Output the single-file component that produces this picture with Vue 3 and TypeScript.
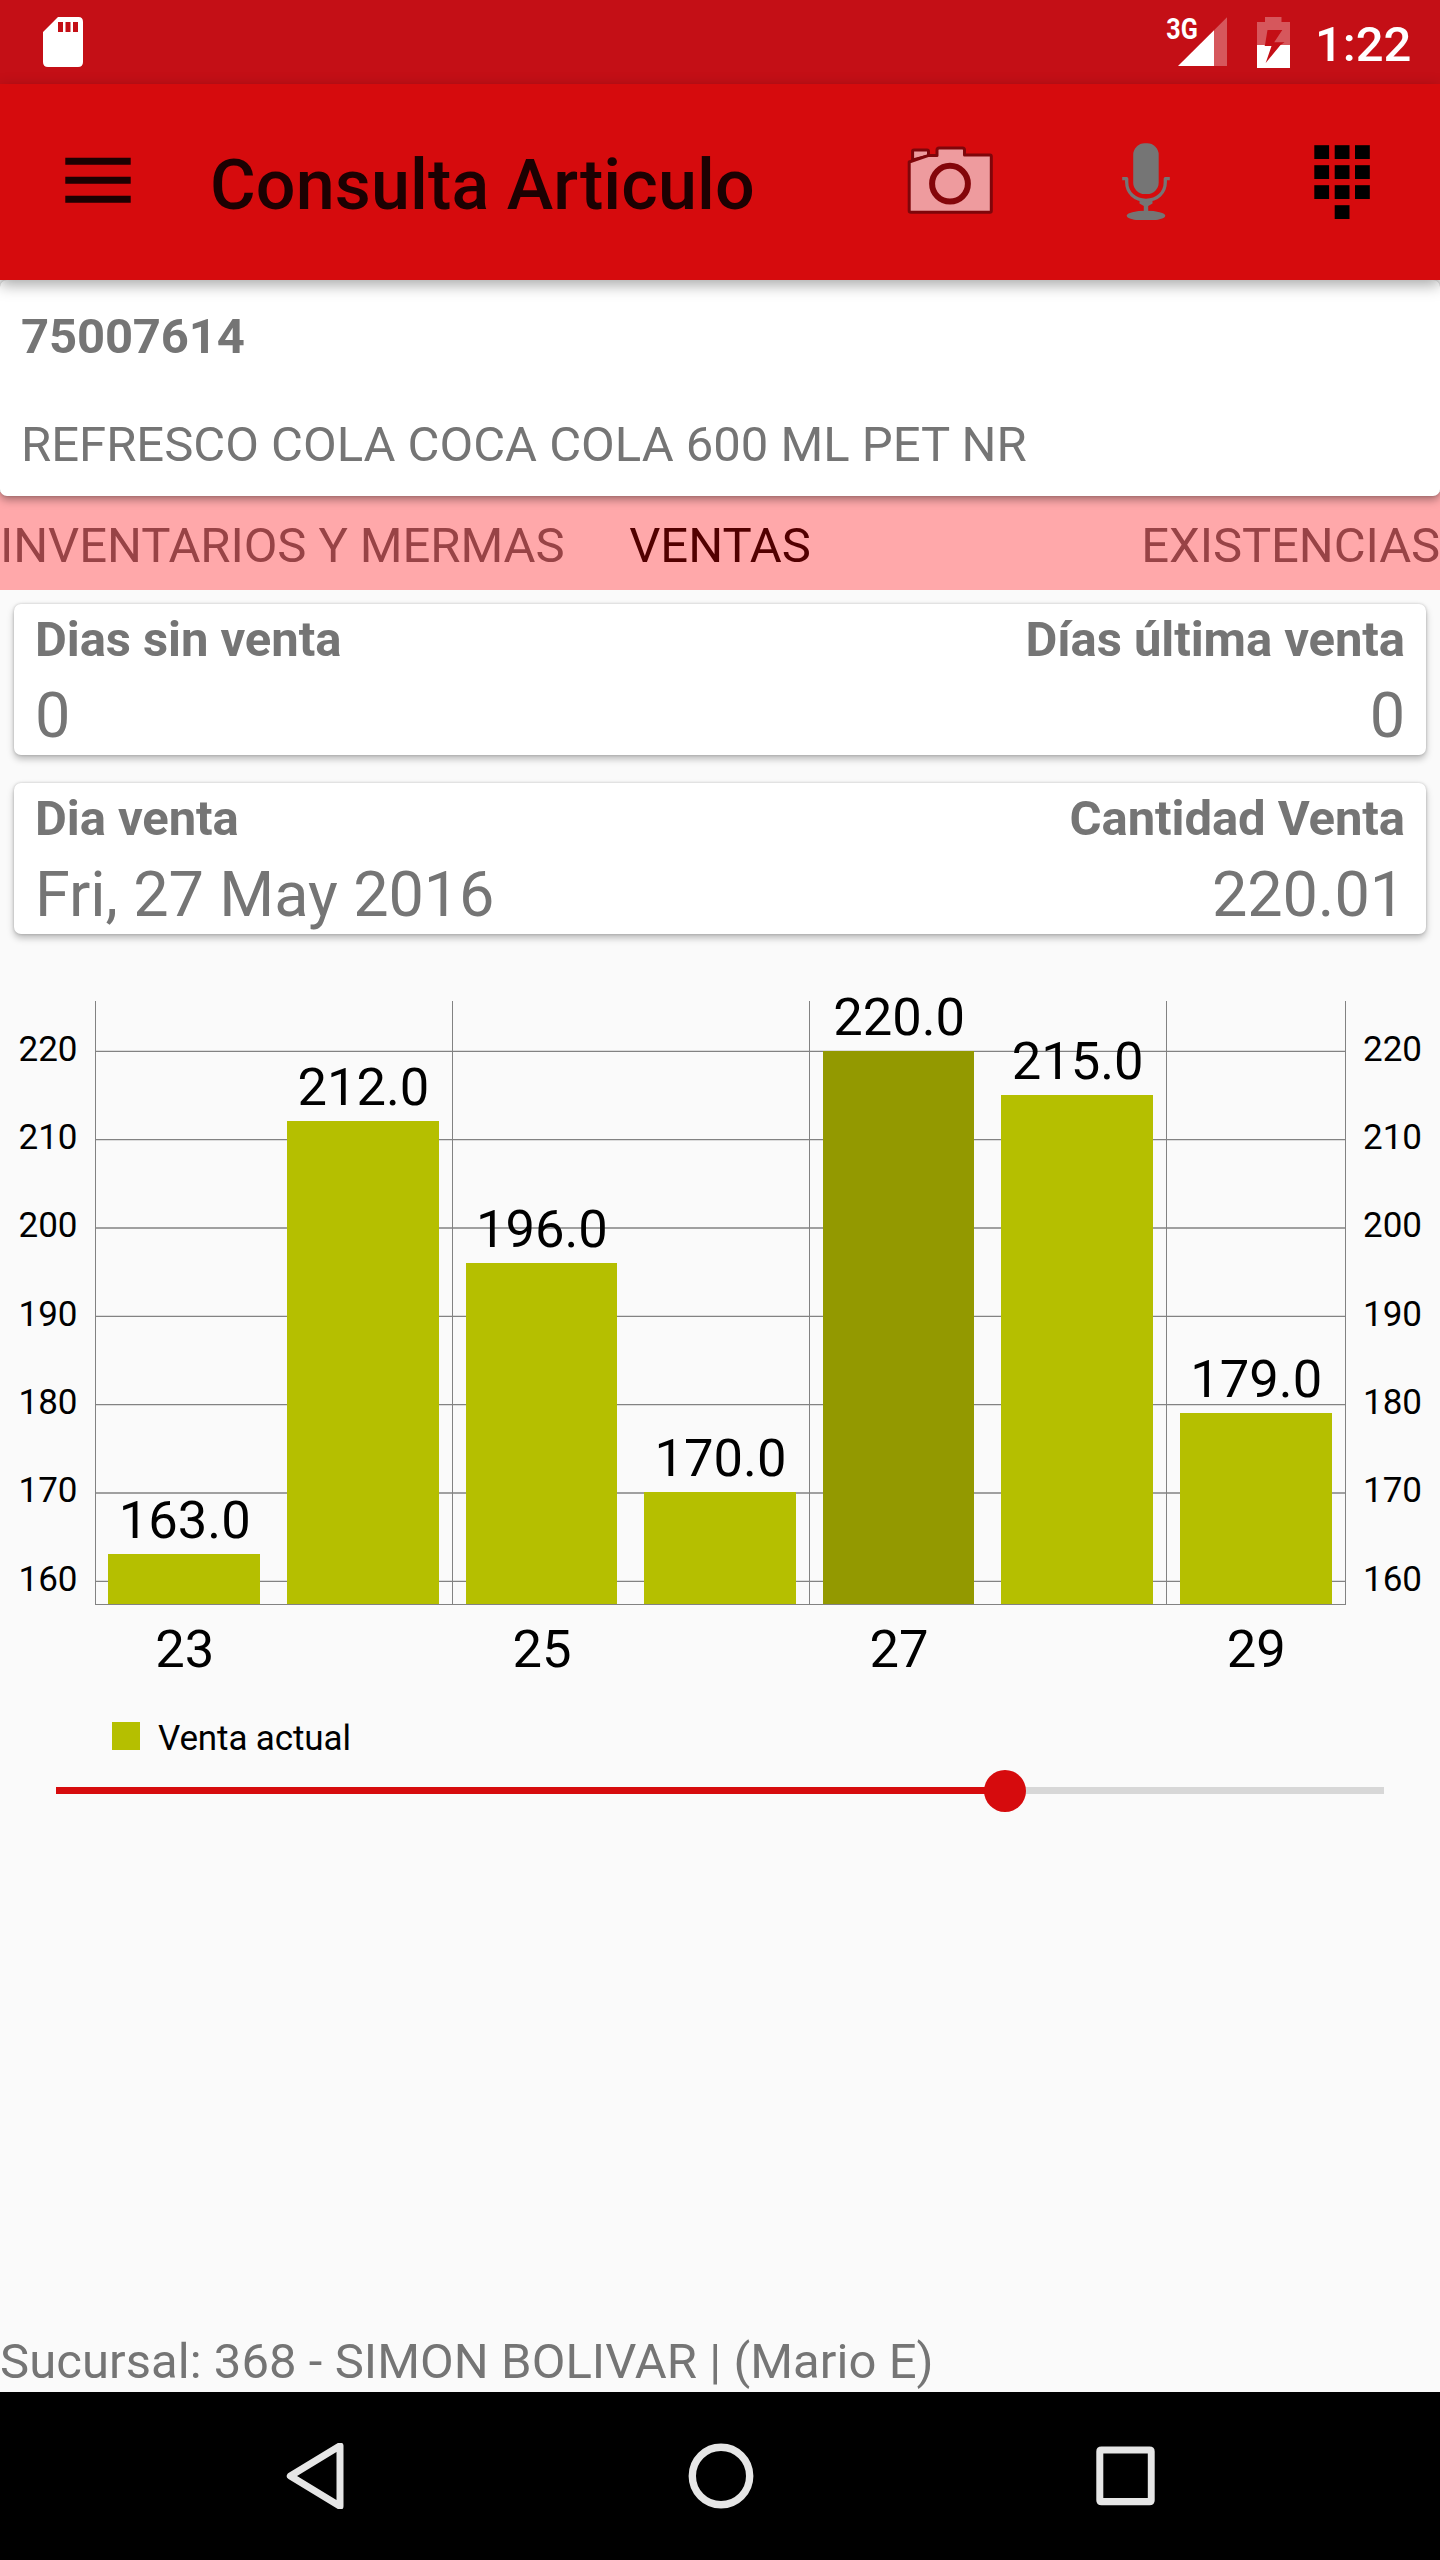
<script setup lang="ts">
interface Sale {
  day: number
  value: number
}

interface Stat {
  label: string
  value: string
}

const sales: Sale[] = [
  { day: 23, value: 163 },
  { day: 24, value: 212 },
  { day: 25, value: 196 },
  { day: 26, value: 170 },
  { day: 27, value: 220 },
  { day: 28, value: 215 },
  { day: 29, value: 179 },
]
const selectedDay = 27

const cards: Stat[][] = [
  [
    { label: 'Dias sin venta', value: '0' },
    { label: 'Días última venta', value: '0' },
  ],
  [
    { label: 'Dia venta', value: 'Fri, 27 May 2016' },
    { label: 'Cantidad Venta', value: '220.01' },
  ],
]

// Chart geometry, in the pixels of the chart's own box
const left = 95
const right = 1345
const top = 51
const bottom = 654
const slot = (right - left) / sales.length
const barWidth = slot * 0.85
const ticks = [220, 210, 200, 190, 180, 170, 160]

const yOf = (v: number) => 101.33 + (220 - v) * 8.833
const barTop = (v: number) => Math.floor(yOf(v))
const barX = (i: number) => Math.round(left + slot * i + (slot - barWidth) / 2)
const barEnd = (i: number) => Math.round(left + slot * i + (slot + barWidth) / 2)
const centre = (i: number) => left + slot * (i + 0.5)

const bars = sales.map((s, i) => ({
  ...s,
  x: barX(i),
  y: barTop(s.value),
  w: barEnd(i) - barX(i),
  h: bottom - barTop(s.value),
  cx: centre(i) + 0.5,
  active: s.day === selectedDay,
}))
const gridX = [0, 2, 4, 6, 7].map((i) => Math.floor(left + slot * i))
const dayLabels = bars.filter((_, i) => i % 2 === 0)

const padColumns = [0, 20.4, 40.7]
const padRows = [0, 20, 40]
const progress = (948.7 / 1328) * 100
</script>

<template>
  <div class="screen">
    <header class="status">
      <svg class="sd" width="40" height="50" viewBox="0 0 40 50">
        <path fill="#fff" fill-rule="evenodd" d="M15 0H35.500Q40 0 40 5V45Q40 50 35 50H5Q0 50 0 45V15ZM15 5V15H20V5ZM22.500 5V15H27.500V5ZM30 5V15H35V5Z" />
      </svg>
      <svg class="signal" width="76" height="60" viewBox="-12 -4 76 60">
        <path fill="#fff" fill-opacity=".3" d="M50 14.300 63 1.300V50H50Z" />
        <path fill="#fff" d="M14 50 50 14.300V50Z" />
        <text class="net" x="2.300" y="22.700" textLength="31.500" lengthAdjust="spacingAndGlyphs">3G</text>
      </svg>
      <svg class="battery" width="33" height="51" viewBox="0 0 33 51">
        <path fill="#fff" fill-opacity=".3" fill-rule="evenodd" d="M8 0H24.500V5H33V28H23.500L27.500 25.300H17.200L25.300 13H10.500L8 28H0V5H8Z" />
        <path fill="#fff" d="M0 28H8L7.500 29H14.500L8.700 46 23.500 28H33V51H0Z" />
      </svg>
      <span class="clock">1:22</span>
    </header>

    <nav class="appbar">
      <svg class="menu" width="66" height="46" viewBox="0 0 66 46">
        <path fill="#1c0102" d="M.3.800H65.700V7.800H.3ZM.3 19.800H65.700V26.800H.3ZM.3 38.800H65.700V45.800H.3Z" />
      </svg>
      <h1 class="title">Consulta Articulo</h1>
      <svg class="camera" width="100" height="80" viewBox="0 0 100 80">
        <g fill="#ee9b9e" stroke="#7e060a" stroke-width="3" stroke-linejoin="round">
          <path d="M12.600 20V11.200Q12.600 10 14 10H27Q28.500 10 28.500 11.500V16Z" />
          <path d="M9.200 22 28 15.600H37V10Q37 8 39 8H62.500Q64.500 8 64.500 10V15H90Q91.300 15 91.300 16.500V71Q91.300 72.300 90 72.300H11Q9.200 72.300 9.200 71Z" />
        </g>
        <circle cx="50" cy="43.700" r="17.900" fill="none" stroke="#84060a" stroke-width="6" />
      </svg>
      <svg class="mic" width="50" height="80" viewBox="0 0 50 80">
        <g fill="#757575">
          <rect x="12.200" y="3.300" width="25.500" height="50.700" rx="11.500" />
          <path d="M18.500 60H31.500V63.500L27.200 66V71.500H22.800V66L18.500 63.500Z" />
          <ellipse cx="25" cy="75.700" rx="19.300" ry="5" />
        </g>
        <path d="M1.200 38.700H5.700V42C5.700 53 14 60.300 25 60.300S44.300 53 44.300 42V38.700H48.800" fill="none" stroke="#757575" stroke-width="3.300" stroke-linejoin="round" />
      </svg>
      <svg class="pad" width="56" height="74" viewBox="0 0 56 74">
        <template v-for="y in padRows" :key="y">
          <rect v-for="x in padColumns" :key="x" :x="x + 0.3" :y="y + 0.2" width="14.800" height="13.800" />
        </template>
        <rect x="20.700" y="60.200" width="14.800" height="13.800" />
      </svg>
    </nav>

    <section class="item">
      <p class="code">75007614</p>
      <p class="name">REFRESCO COLA COCA COLA 600 ML PET NR</p>
    </section>

    <div class="tabs">
      <span class="tab start">INVENTARIOS Y MERMAS</span>
      <span class="tab active">VENTAS</span>
      <span class="tab end">EXISTENCIAS</span>
    </div>

    <main class="content">
      <section v-for="(card, i) in cards" :key="i" class="card">
        <div v-for="stat in card" :key="stat.label" class="stat">
          <span class="label">{{ stat.label }}</span>
          <span class="value">{{ stat.value }}</span>
        </div>
      </section>

      <svg class="chart" width="1440" height="816" viewBox="0 0 1440 816">
        <g stroke="#828282">
          <line v-for="t in ticks" :key="t" :x1="left" :x2="right" :y1="yOf(t)" :y2="yOf(t)" stroke-width="1.350" />
          <line v-for="x in gridX" :key="x" :x1="x + 0.5" :x2="x + 0.5" :y1="top" :y2="bottom" stroke-width="1" />
        </g>
        <rect v-for="b in bars" :key="b.day" :x="b.x" :y="b.y" :width="b.w" :height="b.h" :fill="b.active ? '#939900' : '#b5bf00'" />
        <line :x1="left" :x2="right + 1" :y1="bottom + 0.5" :y2="bottom + 0.5" stroke="#828282" />
        <text v-for="b in bars" :key="b.day" class="big" :x="b.cx" :y="yOf(b.value) - 16.5">{{ b.value.toFixed(1) }}</text>
        <g v-for="t in ticks" :key="t" class="small">
          <text class="rightward" x="77.500" :y="yOf(t) + 9.400">{{ t }}</text>
          <text x="1363" :y="yOf(t) + 9.400">{{ t }}</text>
        </g>
        <text v-for="b in dayLabels" :key="b.day" class="big" :x="b.cx" y="716.700">{{ b.day }}</text>
        <rect x="112" y="772" width="28" height="28" fill="#b5bf00" />
        <text class="small legend" x="158" y="800">Venta actual</text>
      </svg>

      <div class="slider">
        <div class="track">
          <div class="done" :style="{ width: progress + '%' }"><i class="thumb"></i></div>
        </div>
      </div>
    </main>

    <p class="branch">Sucursal: 368 - SIMON BOLIVAR | (Mario E)</p>

    <footer class="nav">
      <svg width="66" height="66" viewBox="0 0 66 66">
        <path d="M56 2.800V63.200L6.300 33Z" fill="none" stroke="#e6e6e6" stroke-width="7" stroke-linejoin="round" />
      </svg>
      <svg width="66" height="66" viewBox="0 0 66 66">
        <circle cx="33" cy="33" r="28.700" fill="none" stroke="#e6e6e6" stroke-width="7.400" />
      </svg>
      <svg width="66" height="66" viewBox="0 0 66 66">
        <path fill="#e6e6e6" fill-rule="evenodd" d="M8.500 3.500H57.500Q62.700 3.500 62.700 8.500V57.300Q62.700 62.300 57.500 62.300H9.500Q4.300 62.300 4.300 57.300V8.500Q4.300 3.500 9.500 3.500ZM11.300 10.500V55H55.800V10.500Z" />
      </svg>
    </footer>
  </div>
</template>

<style>
body {
  margin: 0;
  background: #fafafa;
}
</style>

<style scoped>
.screen {
  width: 1440px;
  height: 2560px;
  display: flex;
  flex-direction: column;
  overflow: hidden;
  background: #fafafa;
  font-family: Roboto, "Liberation Sans", sans-serif;
  font-size: 49px;
  color: #757575;
}
svg {
  display: block;
  flex: none;
}
p,
h1 {
  margin: 0;
  white-space: nowrap;
}
.status {
  flex: none;
  height: 84px;
  box-sizing: border-box;
  padding: 0 29px 0 43px;
  display: flex;
  align-items: center;
  background: #c40f16;
}
.signal {
  margin-left: auto;
  margin-right: 29px;
}
.net {
  font-size: 29px;
  font-weight: 700;
  fill: #fff;
}
.clock {
  width: 96px;
  margin-left: 25px;
  padding-top: 6px;
  text-align: right;
  font-weight: 500;
  line-height: 84px;
  color: #fff;
}
.appbar {
  position: relative;
  z-index: 2;
  flex: none;
  height: 196px;
  box-sizing: border-box;
  padding: 0 70px 0 65px;
  display: flex;
  align-items: center;
  background: #d60b0d;
  box-shadow: 0 5px 14px rgba(0, 0, 0, 0.34);
}
.menu {
  margin-bottom: 4px;
}
.title {
  flex: 1;
  margin-left: 79px;
  padding-top: 6px;
  font-size: 70px;
  font-weight: 500;
  line-height: 90px;
  letter-spacing: 0.13px;
  color: #1c0102;
}
.camera,
.mic {
  margin-bottom: 4px;
}
.mic {
  margin-left: 121px;
}
.pad {
  margin-left: 143px;
}
.item {
  position: relative;
  z-index: 1;
  flex: none;
  height: 216px;
  box-sizing: border-box;
  padding: 1px 21px 0;
  border-radius: 7px;
  background: #fff;
  box-shadow: 0 4px 8px rgba(0, 0, 0, 0.34), 0 0 3px rgba(0, 0, 0, 0.18);
}
.code {
  font-weight: 700;
  line-height: 112px;
  letter-spacing: -0.15px;
}
.name {
  line-height: 104px;
}
.tabs {
  flex: none;
  height: 98px;
  margin-top: -4px;
  box-sizing: border-box;
  padding-top: 9px;
  display: grid;
  grid-template-columns: 1fr auto 1fr;
  line-height: 89px;
  background: #ffa8aa;
  color: #984346;
}
.tab {
  padding-top: 1px;
  line-height: 88px;
  white-space: nowrap;
}
.start {
  letter-spacing: -0.08px;
}
.active {
  color: #520000;
}
.end {
  text-align: right;
  letter-spacing: -0.1px;
}
.content {
  flex: 1;
  padding-top: 14px;
}
.card {
  height: 151px;
  box-sizing: border-box;
  margin: 0 14px 28px;
  padding: 0 21px;
  display: flex;
  justify-content: space-between;
  border-radius: 7px;
  background: #fff;
  box-shadow: 0 4px 7px rgba(0, 0, 0, 0.26), 0 0 3px rgba(0, 0, 0, 0.2);
}
.stat {
  display: flex;
  flex-direction: column;
}
.stat:last-child {
  text-align: right;
}
.label {
  font-weight: 700;
  line-height: 71px;
  letter-spacing: -0.08px;
}
.value {
  padding-top: 1px;
  font-size: 63px;
  line-height: 80px;
  letter-spacing: -0.1px;
}
.chart {
  margin-top: -12px;
}
.chart text {
  fill: #000;
}
.big {
  font-size: 52.5px;
  text-anchor: middle;
}
.small {
  font-size: 35px;
}
.legend {
  letter-spacing: -0.12px;
}
.rightward {
  text-anchor: end;
}
.slider {
  padding: 21px 56px 0;
}
.track {
  height: 7px;
  background: #d7d7d7;
}
.done {
  height: 7px;
  display: flex;
  align-items: center;
  justify-content: flex-end;
  background: #d60b0d;
}
.thumb {
  flex: none;
  width: 42px;
  height: 42px;
  margin-right: -21px;
  border-radius: 50%;
  background: #d60b0d;
}
.branch {
  flex: none;
  height: 62px;
  line-height: 64px;
  letter-spacing: 0.06px;
}
.nav {
  flex: none;
  height: 168px;
  box-sizing: border-box;
  padding: 0 282px 0 284px;
  display: flex;
  align-items: center;
  justify-content: space-between;
  background: #000;
}
</style>
